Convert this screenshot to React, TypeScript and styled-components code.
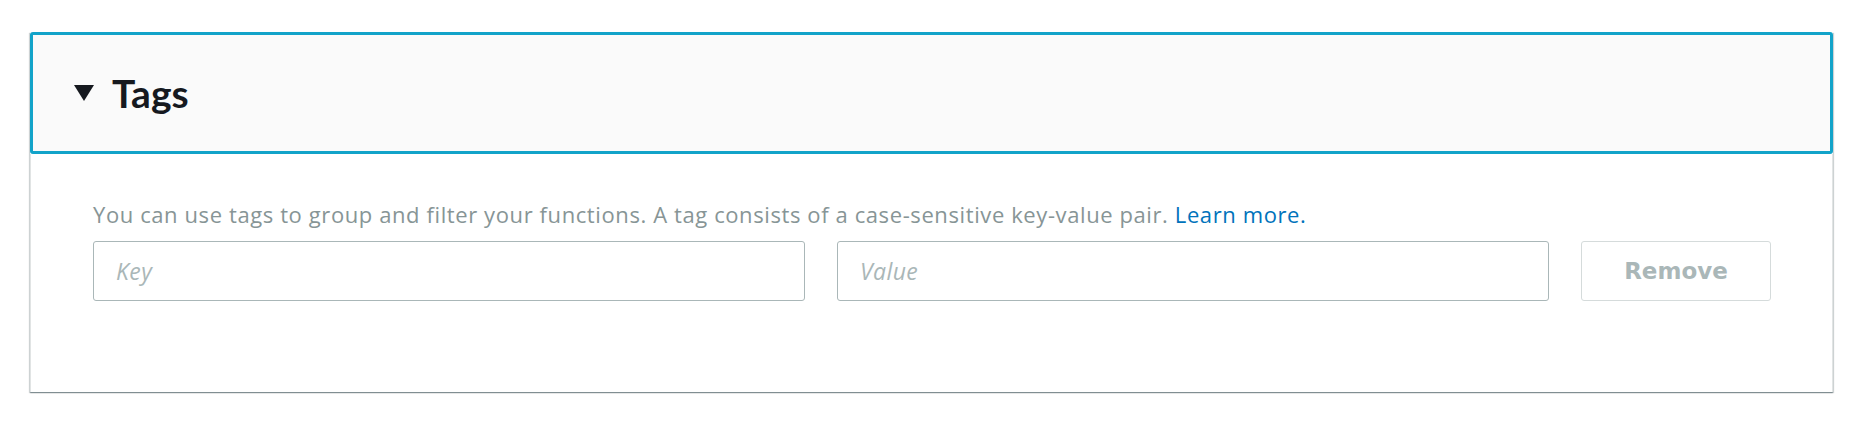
import styled, { createGlobalStyle } from 'styled-components'

const GlobalStyle = createGlobalStyle`
  html, body {
    margin: 0;
    padding: 0;
    background: #ffffff;
    font-family: 'Open Sans', 'Noto Sans', 'Liberation Sans', sans-serif;
  }
`

export default function App() {
  return (
    <>
      <GlobalStyle />
      <Page>
        <Panel>
          <Header>
            <Caret viewBox="0 0 20 16" aria-hidden>
              <path d="M0 0 L20 0 L10 16 Z" fill="#16191f" />
            </Caret>
            <Title>Tags</Title>
          </Header>
          <Body>
            <Description>
              You can use tags to group and filter your functions. A tag consists of a case-sensitive key-value pair.{' '}
              <Link href="#">Learn more.</Link>
            </Description>
            <TagRow>
              <Field placeholder="Key" />
              <Field placeholder="Value" />
              <RemoveButton disabled>Remove</RemoveButton>
            </TagRow>
          </Body>
        </Panel>
      </Page>
    </>
  )
}

const Page = styled.div`
  padding: 32px 36px 30px 30px;
`

const Panel = styled.section`
  background: #ffffff;
  box-shadow: 0 1px 1px 0 rgba(0, 28, 36, 0.3), 1px 1px 1px 0 rgba(0, 28, 36, 0.15),
    -1px 1px 1px 0 rgba(0, 28, 36, 0.15);
`

const Header = styled.div`
  display: flex;
  align-items: center;
  gap: 18px;
  height: 122px;
  box-sizing: border-box;
  padding-left: 41px;
  background: #fafafa;
  border: 3px solid #12a3c9;
  border-radius: 3px;
`

const Caret = styled.svg`
  width: 20px;
  height: 16px;
  flex-shrink: 0;
`

const Title = styled.h2`
  margin: 0;
  font-family: Lato, 'Open Sans', sans-serif;
  font-size: 39px;
  font-weight: 700;
  color: #16191f;
  line-height: 1;
`

const Body = styled.div`
  padding: 46px 61px 91px 62px;
  border-left: 1px solid #e1e4e4;
  border-right: 1px solid #e1e4e4;
`

const Description = styled.p`
  margin: 0 0 12px;
  font-size: 22px;
  line-height: 29px;
  letter-spacing: 0.6px;
  color: #879596;
`

const Link = styled.a`
  color: #0073bb;
  text-decoration: none;
`

const TagRow = styled.div`
  display: grid;
  grid-template-columns: 1fr 1fr 190px;
  column-gap: 32px;
`

const Field = styled.input`
  height: 60px;
  box-sizing: border-box;
  padding: 0 22px;
  border: 1px solid #aab7b8;
  border-radius: 3px;
  font-family: inherit;
  font-size: 23px;
  letter-spacing: 0.4px;
  color: #16191f;
  outline: none;
  min-width: 0;

  &::placeholder {
    color: #aab7b8;
    font-style: italic;
  }
`

const RemoveButton = styled.button`
  height: 60px;
  border: 1px solid #d5dbdb;
  border-radius: 3px;
  background: #ffffff;
  font-family: 'DejaVu Sans', 'Open Sans', sans-serif;
  font-size: 23px;
  font-weight: 700;
  color: #aab7b8;
`
